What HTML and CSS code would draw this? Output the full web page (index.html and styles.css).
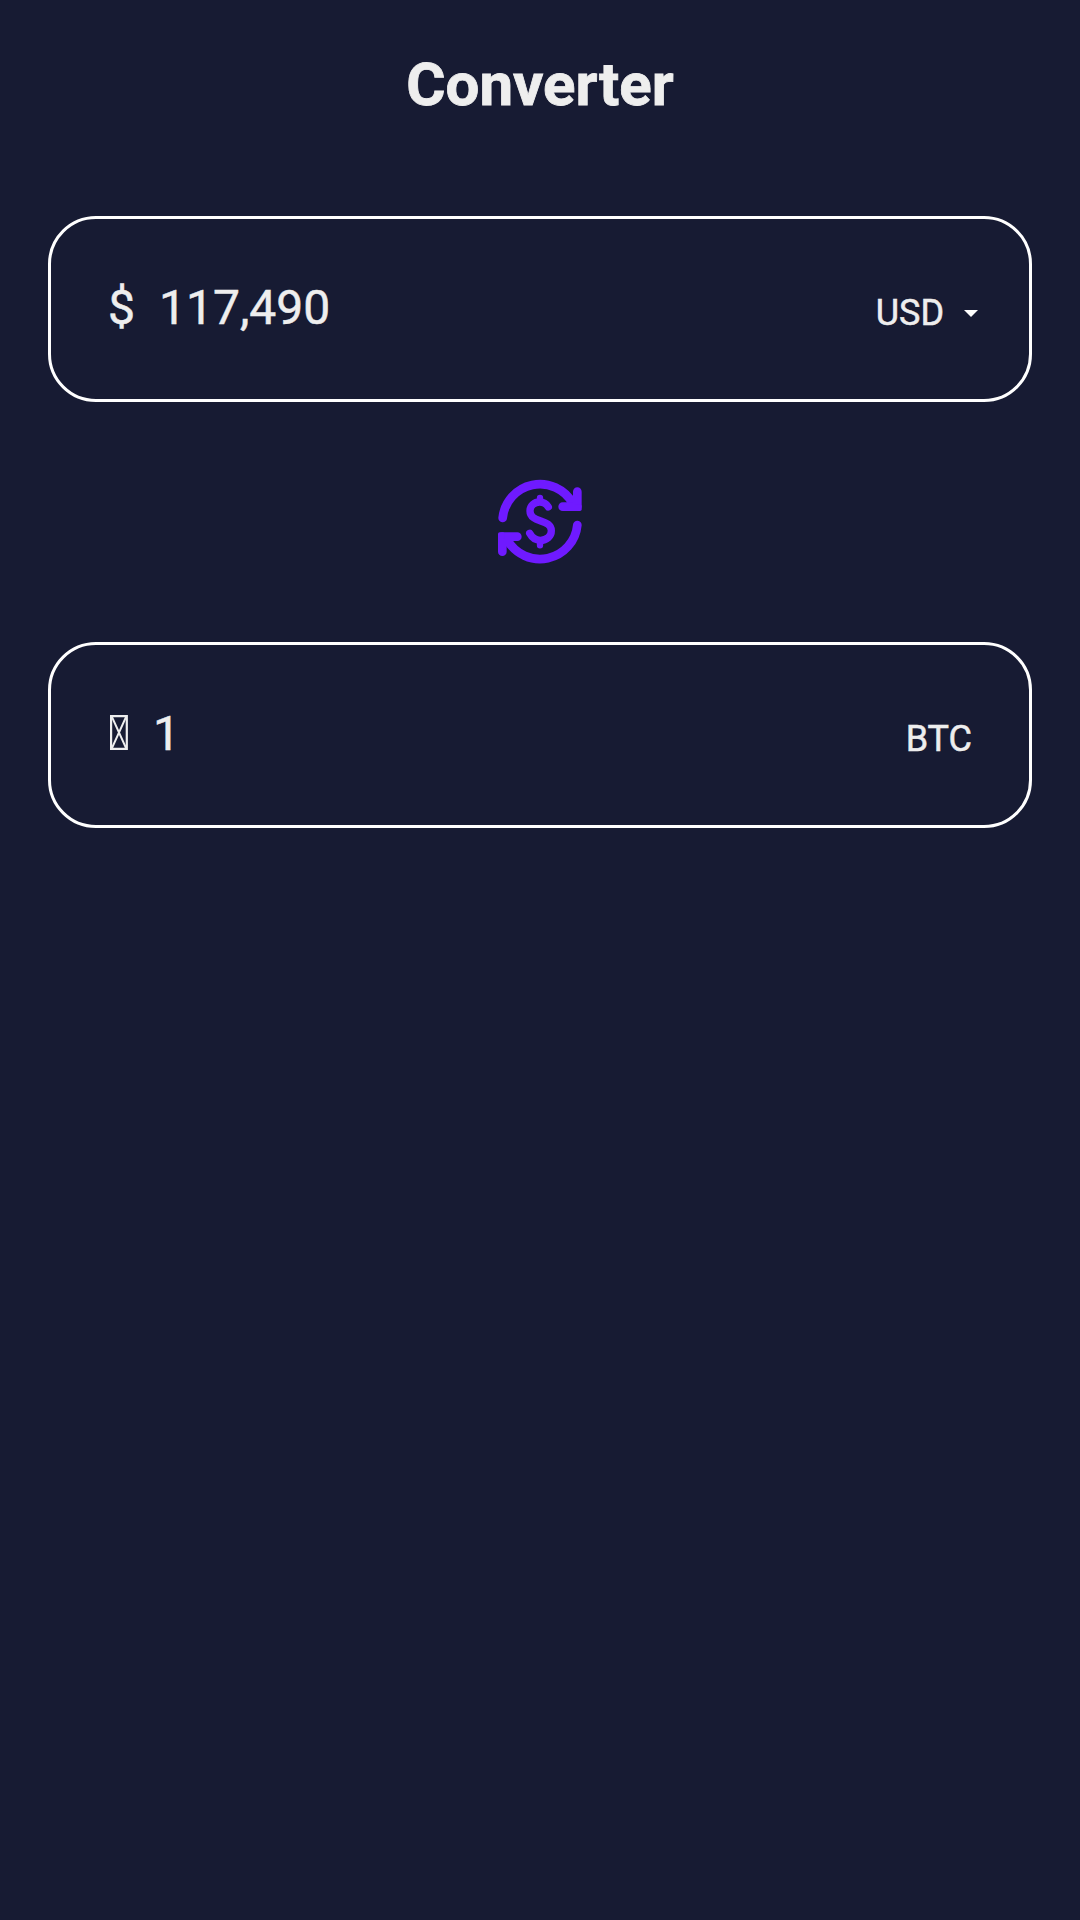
FILE: index.html
```html
<!DOCTYPE html>
<html lang="en">
<head>
<meta charset="utf-8">
<title>Converter</title>
<link rel="stylesheet" href="styles.css">
</head>
<body>
<main class="screen">
  <h1 class="title">Converter</h1>
  <section class="field">
    <div class="amount"><span class="symbol">$</span><span>117,490</span></div>
    <div class="currency">
      <span>USD</span>
      <svg class="caret" viewBox="0 0 14 7"><path d="M0 0h14L7 7z" fill="#fff"/></svg>
    </div>
  </section>
  <svg class="swap" viewBox="0 0 360 360" fill="none" stroke="#6f1aff" stroke-width="26" stroke-linecap="round" stroke-linejoin="round">
    <path d="M68 174A112.5 112.5 0 0 1 278 130"/>
    <path d="M292 95V140H248"/>
    <path d="M292 195A112.5 112.5 0 0 1 82 240"/>
    <path d="M67 275V230H112"/>
    <g fill="#6f1aff" stroke="none">
      <rect x="285" y="133" width="20" height="20" rx="5"/>
      <rect x="54" y="217" width="20" height="20" rx="5"/>
    </g>
    <path stroke-width="22" d="M205 141C198 130 190 126 179 126C163 126 150 137 150 153C150 190 214 176 214 212C214 229 200 241 181 241C167 241 156 233 149 220"/>
    <path stroke-width="19" d="M180 114V124M180 244V256"/>
  </svg>
  <section class="field">
    <div class="amount">
      <svg class="missing" viewBox="0 0 18 35" fill="none" stroke="#eee"><path stroke-width="2.2" d="M1.1 1.1H16.8V33.9H1.1Z"/><path stroke-width="1.9" d="M2 2L16 33M16 2L2 33"/></svg><span>1</span>
    </div>
    <div class="currency plain"><span>BTC</span></div>
  </section>
</main>
</body>
</html>
```
FILE: styles.css
```css
body {
  margin: 0;
  background: #171b33;
  color: #eee;
  font-family: Roboto, sans-serif;
  -webkit-text-stroke: 0.5px #eee;
}
.screen {
  box-sizing: border-box;
  min-height: 1920px;
  padding: 49px 48px 0;
  display: flex;
  flex-direction: column;
}
.title {
  margin: 0 0 95px;
  font-size: 60px;
  line-height: 72px;
  font-weight: 700;
  text-align: center;
  -webkit-text-stroke-width: 0.8px;
}
.field {
  box-sizing: border-box;
  height: 186px;
  padding: 0 51px 0 57px;
  border: 3px solid #fff;
  border-radius: 48px;
  display: flex;
  justify-content: space-between;
  align-items: flex-start;
}
.amount {
  display: flex;
  align-items: baseline;
  padding-top: 61px;
  font-size: 48px;
  line-height: 56px;
}
.symbol {
  margin-right: 24px;
}
.missing {
  width: 18px;
  height: 35px;
  margin: 0 25px 0 2px;
}
.currency {
  display: flex;
  align-items: center;
  padding-top: 73px;
  font-size: 36px;
  line-height: 42px;
}
.plain {
  padding-right: 6px;
}
.caret {
  width: 14px;
  height: 7px;
  margin: 0 0 0 20px;
}
.swap {
  width: 120px;
  height: 120px;
  margin: 58px auto 62px;
}
```
